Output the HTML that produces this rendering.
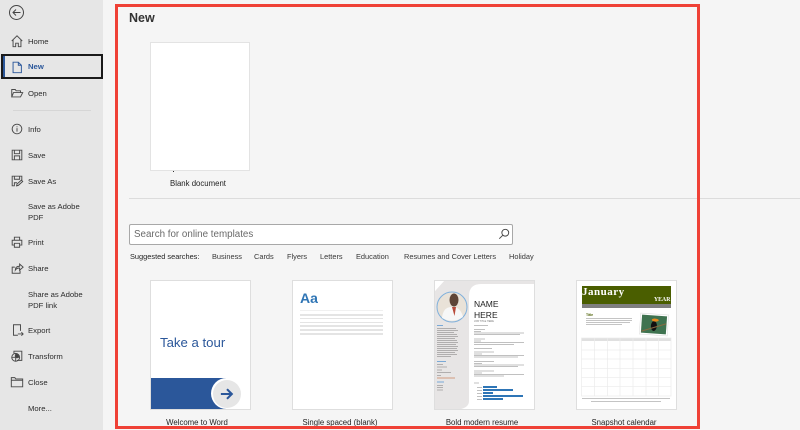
<!DOCTYPE html>
<html><head><meta charset="utf-8"><style>
html,body{margin:0;padding:0}
body{width:800px;height:430px;overflow:hidden;position:relative;background:#f5f5f5;font-family:"Liberation Sans",sans-serif;color:#333}
div,svg{position:absolute}
.t{white-space:nowrap;font-size:7.7px;line-height:10px;color:#2c2c2c;margin-top:1px}
.c{white-space:nowrap;font-size:7.8px;line-height:10px;color:#1f1f1f;text-align:center;width:140px}
.s{white-space:nowrap;font-size:7.4px;line-height:10px;color:#383838;top:252px}
.card{background:#fff;border:1px solid #dedede;box-sizing:border-box;width:101px;height:130px;top:280px}
svg.i{left:10px;width:14px;height:14px;margin-top:1px;fill:none;stroke:#4a4a4a;stroke-width:1.1}
</style></head><body>
<div style="left:0;top:0;width:103px;height:430px;background:#e6e6e6"></div>
<svg style="left:8px;top:4px;width:18px;height:18px" viewBox="0 0 18 18" fill="none" stroke="#444" stroke-width="1"><circle cx="8.500" cy="8.500" r="7"/><path d="M12.500 8.500H5M8 5.500l-3 3 3 3"/></svg>

<svg class="i" style="top:33px" viewBox="0 0 16 16"><path d="M2 8l6-6 6 6M3.500 7v7.500h3v-4h3v4h3V7"/></svg>
<div class="t" style="left:28px;top:36px">Home</div>

<div style="left:1px;top:54px;width:102px;height:25px;box-sizing:border-box;border:2px solid #1a1a1a;background:#e6e6e6"></div>
<div style="left:3px;top:56px;width:1.500px;height:21px;background:#2b579a"></div>
<svg class="i" style="top:59px;stroke:#2b579a" viewBox="0 0 16 16"><path d="M3.500 2.500h6l3.500 3.500v8.500H3.500zM9.500 2.500V6H13"/></svg>
<div class="t" style="left:28px;top:61px;color:#2b579a;font-weight:bold">New</div>

<svg class="i" style="top:85px" viewBox="0 0 16 16"><path d="M2 12.500V4h4l1 1.500h5v2M2 12.500l2-5h10.500l-2.500 5z"/></svg>
<div class="t" style="left:28px;top:88px">Open</div>

<div style="left:13px;top:110px;width:78px;height:1px;background:#d6d6d6"></div>

<svg class="i" style="top:121px" viewBox="0 0 16 16"><circle cx="8" cy="8" r="5.500"/><path d="M8 7v4M8 5v1"/></svg>
<div class="t" style="left:28px;top:124px">Info</div>

<svg class="i" style="top:147px" viewBox="0 0 16 16"><path d="M2.500 2.500h11v11h-11zM5 2.500v4h6v-4M5 13.500v-4.500h6v4.500"/></svg>
<div class="t" style="left:28px;top:150px">Save</div>

<svg class="i" style="top:173px" viewBox="0 0 16 16"><path d="M5.500 13.500h-3v-11h11v5M5 2.500v3.500h6v-3.500M5 13v-3h3M7.500 13.500l.5-2 5-4.500 1.500 1.500-5 4.500z"/></svg>
<div class="t" style="left:28px;top:176px">Save As</div>

<div class="t" style="left:28px;top:201px;line-height:10.500px">Save as Adobe<br>PDF</div>

<svg class="i" style="top:234px" viewBox="0 0 16 16"><path d="M5 6V2.500h6V6M5 11.500H2.500V6h11v5.500H11M5 9.500h6v4.500H5z"/></svg>
<div class="t" style="left:28px;top:237px">Print</div>

<svg class="i" style="top:260px" viewBox="0 0 16 16"><path d="M5.500 7H2.500v7h9v-3M6 10.500c0-3 2-4.500 5-4.500V3.500l4 3.500-4 3.500V8c-2 0-4 .7-5 2.500z"/></svg>
<div class="t" style="left:28px;top:263px">Share</div>

<div class="t" style="left:28px;top:289px;line-height:10.500px">Share as Adobe<br>PDF link</div>

<svg class="i" style="top:322px" viewBox="0 0 16 16"><path d="M12 9V2H4v12h5M9 12.500h6M13 10.500l2 2-2 2"/></svg>
<div class="t" style="left:28px;top:325px">Export</div>

<svg class="i" style="top:348px" viewBox="0 0 16 16"><path d="M4.500 5V2.500h9v10.500H8"/><circle cx="6.500" cy="9.500" r="4.500"/><circle cx="8" cy="8" r="2" fill="#444"/><path d="M2 9.500h9M6.500 5v9"/></svg>
<div class="t" style="left:28px;top:351px">Transform</div>

<svg class="i" style="top:374px" viewBox="0 0 16 16"><path d="M1.500 3h4l1 1.500h8V13.500h-13zM1.500 6h13"/></svg>
<div class="t" style="left:28px;top:377px">Close</div>

<div class="t" style="left:28px;top:403px">More...</div>

<div style="left:129px;top:11px;font-size:12.500px;line-height:14px;font-weight:bold;color:#333">New</div>

<div style="left:150px;top:42px;width:100px;height:129px;background:#fff;border:1px solid #e3e3e3;box-sizing:border-box"></div>
<div style="left:173px;top:171px;width:1px;height:1px;background:#333"></div>
<div class="c" style="left:128px;top:179px">Blank document</div>

<div style="left:129px;top:198px;width:671px;height:1px;background:#dcdcdc"></div>

<div style="left:129px;top:224px;width:384px;height:21px;box-sizing:border-box;background:#fff;border:1px solid #a8a8a8;border-radius:2px"></div>
<div style="left:134px;top:229px;font-size:9.800px;line-height:12px;color:#6a6a6a;white-space:nowrap">Search for online templates</div>
<svg style="left:498px;top:228px;width:12px;height:12px" viewBox="0 0 14 14" fill="none" stroke="#444" stroke-width="1.100"><circle cx="8.500" cy="5.500" r="4"/><path d="M5.500 8.500L1.500 12.500"/></svg>

<div class="s" style="left:130px;color:#1f1f1f">Suggested searches:</div>
<div class="s" style="left:212px">Business</div>
<div class="s" style="left:254px">Cards</div>
<div class="s" style="left:287px">Flyers</div>
<div class="s" style="left:320px">Letters</div>
<div class="s" style="left:356px">Education</div>
<div class="s" style="left:404px">Resumes and Cover Letters</div>
<div class="s" style="left:509px">Holiday</div>

<!-- Take a tour -->
<div class="card" style="left:150px"></div>
<div style="left:160px;top:335px;font-size:13.200px;line-height:16px;color:#2b579a;white-space:nowrap">Take a tour</div>
<div style="left:151px;top:378px;width:75px;height:31px;background:#2b579a"></div>
<div style="left:211px;top:378px;width:31px;height:31px;border-radius:50%;background:#fff"></div>
<div style="left:213px;top:380px;width:28px;height:28px;border-radius:50%;background:#e6e6e6"></div>
<svg style="left:220px;top:387px;width:14px;height:14px" viewBox="0 0 16 16" fill="none" stroke="#2b579a" stroke-width="2.400"><path d="M1 8h12M8 2.500L13.500 8 8 13.500"/></svg>
<div class="c" style="left:127px;top:418px">Welcome to Word</div>

<!-- Single spaced -->
<div class="card" style="left:292px"></div>
<div style="left:300px;top:290px;font-size:14px;line-height:16px;font-weight:bold;color:#2f75b5">Aa</div>
<div style="left:300px;top:310px;width:83px;height:1px;background:#f0f0f0"></div>
<div style="left:300px;top:314px;width:83px;height:1.500px;background:#e4e4e4"></div>
<div style="left:300px;top:317.500px;width:83px;height:1.500px;background:#e4e4e4"></div>
<div style="left:300px;top:321.500px;width:83px;height:1.500px;background:#e4e4e4"></div>
<div style="left:300px;top:325px;width:83px;height:1.500px;background:#e4e4e4"></div>
<div style="left:300px;top:329px;width:83px;height:1.500px;background:#e4e4e4"></div>
<div style="left:300px;top:333px;width:83px;height:1.500px;background:#e4e4e4"></div>
<div class="c" style="left:270px;top:418px">Single spaced (blank)</div>

<!-- Resume -->
<div class="card" style="left:434px"></div>
<svg style="left:435px;top:281px;width:99px;height:128px" viewBox="0 0 99 128">
<path d="M0 128V10L9 0H99V3H46Q34 3 34 15V120Q34 126 26 128z" fill="#e7e5e5"/>
<path d="M0 10L9 0H0z" fill="#fff"/>
<circle cx="17" cy="26" r="15" fill="#e9e2d8" stroke="#7fb0dc" stroke-width="1"/>
<path d="M7 37c1-9 5-11 10-11s9 2 11 10q-10 7-21 1z" fill="#f7f7f7"/>
<ellipse cx="19" cy="19" rx="4.500" ry="6.500" fill="#5d4437"/>
<path d="M17 26h4l-1.500 9z" fill="#b84a3a"/>
<g fill="#333" opacity=".3">
<rect x="2" y="47" width="19" height="1"/><rect x="2" y="49" width="21" height="1"/><rect x="2" y="51" width="17" height="1"/><rect x="2" y="53" width="20" height="1"/><rect x="2" y="55" width="21" height="1"/><rect x="2" y="57" width="18" height="1"/><rect x="2" y="59" width="20" height="1"/><rect x="2" y="61" width="21" height="1"/><rect x="2" y="63" width="19" height="1"/><rect x="2" y="65" width="21" height="1"/><rect x="2" y="67" width="20" height="1"/><rect x="2" y="69" width="21" height="1"/><rect x="2" y="71" width="18" height="1"/><rect x="2" y="73" width="20" height="1"/><rect x="2" y="75" width="14" height="1"/>
<rect x="2" y="83" width="6" height="1"/><rect x="2" y="85.500" width="10" height="1"/><rect x="2" y="88.500" width="5" height="1"/><rect x="2" y="91" width="14" height="1"/><rect x="2" y="94" width="4" height="1"/>
<rect x="2" y="104" width="6" height="1"/><rect x="2" y="106" width="6" height="1"/><rect x="2" y="108.500" width="6" height="1"/>
</g>
<rect x="2" y="44" width="6" height="1" fill="#7aa9d6"/>
<rect x="2" y="80" width="9" height="1" fill="#7aa9d6"/>
<rect x="2" y="96.500" width="18" height="1" fill="#d09a80"/>
<rect x="2" y="100.500" width="7" height="1" fill="#7aa9d6"/>
<g fill="#333" opacity=".3">
<rect x="39" y="44" width="14" height="1"/>
<rect x="39" y="48" width="11" height="1"/><rect x="39" y="50" width="7" height="1"/><rect x="39" y="51.500" width="50" height="1"/><rect x="39" y="53" width="46" height="1"/>
<rect x="39" y="57.500" width="11" height="1"/><rect x="39" y="59.500" width="7" height="1"/><rect x="39" y="61" width="50" height="1"/><rect x="39" y="63" width="40" height="1"/>
<rect x="39" y="67" width="18" height="1"/>
<rect x="39" y="70.500" width="20" height="1"/><rect x="39" y="72.500" width="8" height="1"/><rect x="39" y="74" width="50" height="1"/><rect x="39" y="75.500" width="44" height="1"/>
<rect x="39" y="80" width="20" height="1"/><rect x="39" y="82" width="8" height="1"/><rect x="39" y="83.500" width="50" height="1"/><rect x="39" y="85" width="44" height="1"/>
<rect x="39" y="89.500" width="20" height="1"/><rect x="39" y="91.500" width="8" height="1"/><rect x="39" y="93" width="50" height="1"/><rect x="39" y="94.500" width="30" height="1"/>
<rect x="39" y="101.500" width="5" height="1"/>
<rect x="42" y="106" width="5" height="1"/><rect x="42" y="109" width="5" height="1"/><rect x="42" y="112" width="5" height="1"/><rect x="42" y="115" width="5" height="1"/><rect x="42" y="118" width="5" height="1"/>
</g>
<g fill="#2e75b6"><rect x="48" y="105" width="14" height="2"/><rect x="48" y="108" width="30" height="2"/><rect x="48" y="111" width="10" height="2"/><rect x="48" y="114" width="40" height="2"/><rect x="48" y="117" width="20" height="2"/></g>
</svg>
<div style="left:474px;top:299px;font-size:8.500px;line-height:10.500px;color:#222;white-space:nowrap">NAME<br>HERE</div>
<div style="left:474px;top:320px;font-size:2.500px;line-height:4px;color:#777;white-space:nowrap">JOB TITLE HERE</div>
<div class="c" style="left:412px;top:418px">Bold modern resume</div>

<!-- Calendar -->
<div class="card" style="left:576px"></div>
<div style="left:581.500px;top:286px;width:89.500px;height:18px;background:#4a5e00"></div>
<div style="left:581.500px;top:304px;width:89.500px;height:4px;background:#7f7f7f"></div>
<div style="left:582px;top:286px;font:bold 11px/12px 'Liberation Serif',serif;color:#fff;letter-spacing:.5px;white-space:nowrap">January</div>
<div style="left:654px;top:296px;font:bold 5.800px/8px 'Liberation Serif',serif;color:#fff;white-space:nowrap">YEAR</div>
<div style="left:586px;top:313px;font:bold 3.500px/4px 'Liberation Sans',sans-serif;color:#4a5e00;white-space:nowrap">Title</div>
<svg style="left:576px;top:280px;width:101px;height:130px" viewBox="0 0 101 130">
<g fill="#aaa"><rect x="10" y="38" width="46" height=".7"/><rect x="10" y="40" width="46" height=".7"/><rect x="10" y="42" width="44" height=".7"/><rect x="10" y="44" width="36" height=".7"/></g>
<g transform="rotate(4 78 44)"><rect x="64" y="34" width="28" height="21" fill="#fff" stroke="#ddd" stroke-width=".5"/><rect x="65.500" y="35.500" width="25" height="18" fill="#3f7350"/><ellipse cx="78" cy="46" rx="3" ry="5" fill="#111"/><ellipse cx="79" cy="40" rx="3.500" ry="1.500" fill="#e88a1c"/><path d="M66 52l24-9" stroke="#8a6a40" stroke-width="1"/></g>
<rect x="5.500" y="58" width="89.500" height="3" fill="#e0e0e0"/>
<g fill="none" stroke="#ebebeb" stroke-width=".7"><rect x="5.500" y="58" width="89.500" height="58"/><path d="M5.500 70h89.500M5.500 79h89.500M5.500 88.300h89.500M5.500 97.300h89.500M5.500 106.700h89.500M18.500 58v58M31.500 58v58M44 58v58M57 58v58M70 58v58M82.500 58v58"/></g>
<g fill="#aaa"><rect x="6" y="118" width="88" height=".7"/><rect x="15" y="121" width="70" height=".7"/></g>
</svg>
<div class="c" style="left:554px;top:418px">Snapshot calendar</div>

<!-- red frame -->
<div style="left:115px;top:4px;width:585px;height:425px;box-sizing:border-box;border:3px solid #ef4136"></div>
</body></html>
